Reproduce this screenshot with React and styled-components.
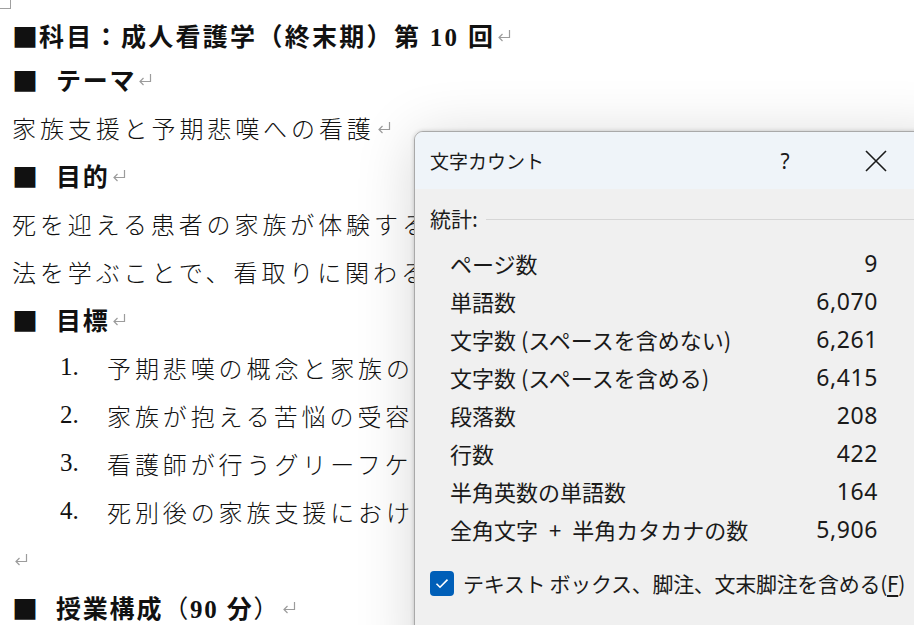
import React from 'react'
import styled, { createGlobalStyle } from 'styled-components'

const GlobalStyle = createGlobalStyle`
    html, body {
        margin: 0;
        padding: 0;
        background: #ffffff;
        overflow: hidden;
    }
    body {
        width: 914px;
        height: 625px;
    }
`

const stats = [
    { label: 'ページ数', value: '9' },
    { label: '単語数', value: '6,070' },
    { label: '文字数 (スペースを含めない)', value: '6,261' },
    { label: '文字数 (スペースを含める)', value: '6,415' },
    { label: '段落数', value: '208' },
    { label: '行数', value: '422' },
    { label: '半角英数の単語数', value: '164' },
    { label: '全角文字 + 半角カタカナの数', value: '5,906' },
]

const goals = [
    '予期悲嘆の概念と家族の',
    '家族が抱える苦悩の受容',
    '看護師が行うグリーフケ',
    '死別後の家族支援におけ',
]

function ReturnMark() {
    return (
        <Mark viewBox="0 0 16 14" aria-hidden="true">
            <path d="M13.5 2 V9.5 H3" fill="none" stroke="#9c9c9c" strokeWidth="1.2" />
            <path d="M6.5 6 L3 9.5 L6.5 13" fill="none" stroke="#9c9c9c" strokeWidth="1.2" />
        </Mark>
    )
}

// the "+" in a label gets a bit more room, like the Windows UI font
function renderLabel(label) {
    const parts = label.split(' + ')
    if (parts.length === 1) return label
    return (
        <>
            {parts[0]}<Plus>+</Plus>{parts[1]}
        </>
    )
}

function App() {
    return (
        <>
            <GlobalStyle />
            <Page>
                <CornerMark />
                <Doc>
                    <DocTitle heading tight><Square>■</Square>科目：成人看護学（終末期）第 10 回<ReturnMark /></DocTitle>
                    <Para heading><Square spaced>■</Square>テーマ<ReturnMark /></Para>
                    <Para>家族支援と予期悲嘆への看護<ReturnMark /></Para>
                    <Para heading><Square spaced>■</Square>目的<ReturnMark /></Para>
                    <Para>死を迎える患者の家族が体験する苦悩を理解し、家族を支える</Para>
                    <Para>法を学ぶことで、看取りに関わる看護師の役割を考える。</Para>
                    <Para heading><Square spaced>■</Square>目標<ReturnMark /></Para>
                    {goals.map((g, i) => (
                        <ListItem key={i}>
                            <Num>{i + 1}.</Num>
                            <span>{g}</span>
                        </ListItem>
                    ))}
                    <Para><ReturnMark /></Para>
                    <Para heading><Square spaced>■</Square>授業構成<Paren>（</Paren>90 分<Paren>）</Paren><ReturnMark /></Para>
                </Doc>

                <Dialog>
                    <TitleBar>
                        <Title>文字カウント</Title>
                        <HelpButton>?</HelpButton>
                        <CloseButton>
                            <svg width="22" height="22" viewBox="0 0 22 22">
                                <path d="M1 1 L21 21 M21 1 L1 21" stroke="#1a1a1a" strokeWidth="1.6" />
                            </svg>
                        </CloseButton>
                    </TitleBar>
                    <DialogBody>
                        <GroupHeader>
                            <span>統計:</span>
                            <Rule />
                        </GroupHeader>
                        <StatList>
                            {stats.map(s => (
                                <StatRow key={s.label}>
                                    <StatLabel>{renderLabel(s.label)}</StatLabel>
                                    <StatValue>{s.value}</StatValue>
                                </StatRow>
                            ))}
                        </StatList>
                        <CheckRow>
                            <CheckBox>
                                <svg width="14" height="11" viewBox="0 0 14 11">
                                    <path d="M1.5 5.8 L5 9.2 L12.5 1.6" fill="none" stroke="#ffffff" strokeWidth="1.6" />
                                </svg>
                            </CheckBox>
                            <span>テキスト ボックス、脚注、文末脚注を含める(<u>F</u>)</span>
                        </CheckRow>
                    </DialogBody>
                </Dialog>
            </Page>
        </>
    )
}

const Page = styled.div`
    position: relative;
    width: 914px;
    height: 625px;
    overflow: hidden;
    background: #ffffff;
`

const CornerMark = styled.div`
    position: absolute;
    left: 0;
    top: 0;
    width: 10px;
    height: 8px;
    border-right: 1px solid #a0a0a0;
    border-bottom: 1px solid #a0a0a0;
`

const Doc = styled.div`
    padding: 15px 0 0 12px;
    font-family: "Liberation Serif", "Noto Sans CJK JP", serif;
    color: #111111;
`

const Para = styled.div`
    display: flex;
    align-items: center;
    height: 48px;
    white-space: nowrap;
    font-size: ${p => (p.heading ? '25px' : '24px')};
    font-weight: ${p => (p.heading ? 700 : 300)};
    letter-spacing: ${p => (p.heading ? (p.tight ? '2.3px' : '1.8px') : '3.9px')};
`

const DocTitle = styled(Para)`
    height: 40px;
`

const Square = styled.span`
    font-family: "Noto Sans CJK JP", sans-serif;
    font-size: 26px;
    letter-spacing: 0;
    margin-right: ${p => (p.spaced ? '18px' : '1px')};
`

const Paren = styled.span`
    font-family: "Noto Sans CJK JP", sans-serif;
    font-weight: 400;
`

const ListItem = styled.div`
    display: flex;
    align-items: center;
    height: 48px;
    padding-left: 48px;
    white-space: nowrap;
    font-size: 24px;
    font-weight: 300;
    letter-spacing: 3.9px;
`

const Num = styled.span`
    display: inline-block;
    width: 47px;
    font-size: 25px;
    font-weight: 400;
    letter-spacing: 0;
`

const Mark = styled.svg`
    width: 16px;
    height: 14px;
    margin-left: 1px;
    flex: none;
`

const Dialog = styled.div`
    position: absolute;
    left: 414px;
    top: 131px;
    width: 540px;
    height: 540px;
    border: 1.5px solid #a9a9a9;
    border-radius: 9px;
    background: #f0f0f0;
    overflow: hidden;
    box-shadow: 0 0 4px rgba(0, 0, 0, 0.18), 0 6px 60px rgba(0, 0, 0, 0.16);
    font-family: "Noto Sans CJK JP", "Noto Sans", sans-serif;
    color: #1a1a1a;
`

const TitleBar = styled.div`
    display: flex;
    align-items: center;
    height: 57px;
    padding-left: 15px;
    background: #eff4f9;
`

const Title = styled.div`
    flex: 1;
    font-size: 19px;
`

const HelpButton = styled.div`
    width: 28px;
    margin-right: 66px;
    text-align: center;
    font-family: "Noto Sans", sans-serif;
    font-size: 21px;
`

const CloseButton = styled.div`
    display: flex;
    width: 22px;
    margin-right: 68px;
`

const DialogBody = styled.div`
    padding: 14px 0 0 15px;
`

const GroupHeader = styled.div`
    display: flex;
    align-items: center;
    gap: 8px;
    font-size: 21px;
    height: 30px;
`

const Rule = styled.div`
    flex: 1;
    height: 1px;
    margin-top: 2px;
    background: #d6d6d6;
`

const StatList = styled.div`
    padding: 11px 0 0 20px;
    width: 428px;
`

const StatRow = styled.div`
    display: flex;
    align-items: center;
    justify-content: space-between;
    height: 38px;
`

const StatLabel = styled.span`
    font-size: 22px;
    white-space: pre;
`

const Plus = styled.span`
    margin: 0 11px;
`

const StatValue = styled.span`
    font-family: "Noto Sans", sans-serif;
    font-size: 23px;
    letter-spacing: 0.6px;
`

const CheckRow = styled.div`
    display: flex;
    align-items: center;
    gap: 9px;
    margin-top: 20px;
    font-size: 21px;
    letter-spacing: -0.3px;
    white-space: nowrap;

    u {
        text-underline-offset: 3px;
    }
`

const CheckBox = styled.div`
    display: flex;
    align-items: center;
    justify-content: center;
    width: 24px;
    height: 25px;
    border-radius: 4px;
    background: #005fb8;
`

export default App
